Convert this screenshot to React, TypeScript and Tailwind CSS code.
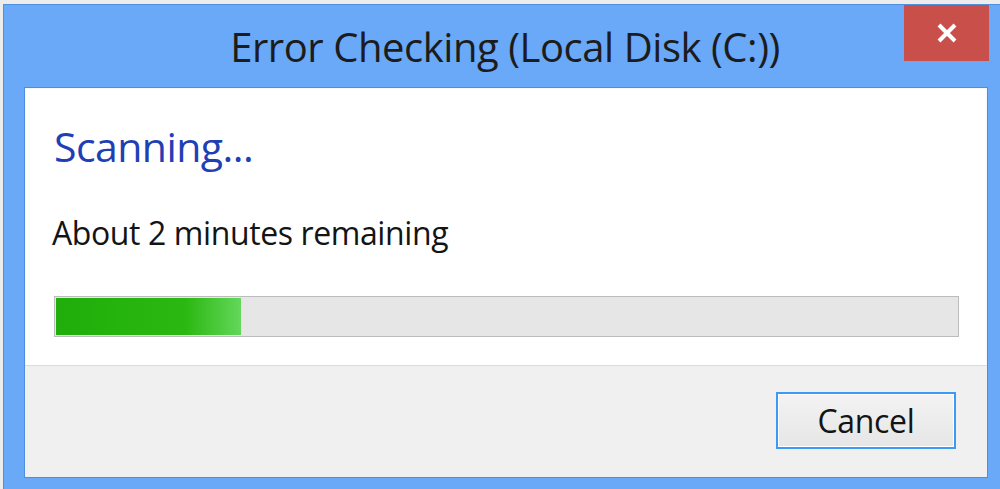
import React from 'react';

const font = { fontFamily: '"Open Sans", "Noto Sans", "Liberation Sans", sans-serif' };

const App: React.FC = () => {
  return (
    <div className="w-[1000px] h-[489px] bg-[#ececec] pt-[4px] pl-[3px] overflow-hidden" style={font}>
      <div className="relative w-[997px] h-[485px] bg-[#6aa8f8] border-l border-t border-[#4f8fe0] flex flex-col">
        {/* Title bar */}
        <div className="h-[82px] shrink-0 flex items-center justify-center pl-[6px] pt-[2px]">
          <span className="text-[40px] text-[#1c1c1c] tracking-[-0.45px]">Error Checking (Local Disk (C:))</span>
        </div>
        <div className="absolute left-[900px] top-0 w-[85px] h-[56px] bg-[#c9504a] flex items-center justify-center">
          <svg width="22" height="22" viewBox="0 0 22 22">
            <path d="M3 3 L19 19 M19 3 L3 19" stroke="#fff" strokeWidth="4" strokeLinecap="butt" />
          </svg>
        </div>

        {/* Content */}
        <div className="ml-[20px] w-[964px] h-[391px] border border-[#4e8ee0] flex flex-col">
          <div className="flex-1 bg-white border border-b-0 border-[#f4f8fe] pl-[28px] pr-[28px] pt-[31px] flex flex-col">
            <div className="text-[41px] leading-[52px] text-[#1f40b4] tracking-[-0.55px]">Scanning...</div>
            <div className="mt-[43px] text-[32px] leading-[36px] text-[#141414] tracking-[-0.4px] -ml-[2px]">About 2 minutes remaining</div>
            <div className="mt-[45px] w-[905px] h-[41px] border border-[#bcbcbc] bg-[#e6e6e6] p-[1px] flex">
              <div className="w-[185px] h-full bg-[linear-gradient(to_right,#1fae0a_0%,#2bb812_70%,#63d75a_100%)]" />
            </div>
          </div>
          <div className="h-[112px] shrink-0 bg-[#f0f0f0] border-t border-[#dcdcdc] flex justify-end items-start pt-[26px] pr-[31px]">
            <button className="w-[180px] h-[57px] border-2 border-[#3d9af2] bg-[linear-gradient(to_bottom,#f3f3f3,#e6e6e6)] text-[32px] text-[#141414] flex items-center justify-center shadow-[inset_0_0_0_1px_#ffffff] tracking-[-0.3px]">
              Cancel
            </button>
          </div>
        </div>
      </div>
    </div>
  );
};

export default App;
